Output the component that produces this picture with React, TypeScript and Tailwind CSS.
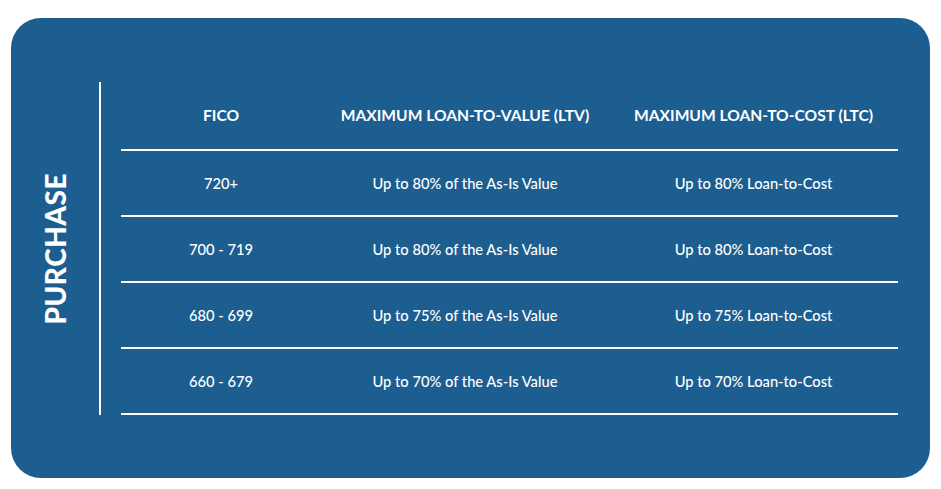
const rows = [
  { fico: "720+", ltv: "Up to 80% of the As-Is Value", ltc: "Up to 80% Loan-to-Cost" },
  { fico: "700 - 719", ltv: "Up to 80% of the As-Is Value", ltc: "Up to 80% Loan-to-Cost" },
  { fico: "680 - 699", ltv: "Up to 75% of the As-Is Value", ltc: "Up to 75% Loan-to-Cost" },
  { fico: "660 - 679", ltv: "Up to 70% of the As-Is Value", ltc: "Up to 70% Loan-to-Cost" },
];

export default function App() {
  return (
    <div className="min-h-[489px] w-[941px] bg-white pt-[18px] pl-[11px] font-['Lato','Liberation_Sans',sans-serif] text-white">
      <div className="flex w-[919px] h-[460px] rounded-[30px] bg-[#1d5e91] pt-[64px] pr-[32px]">
        {/* side label */}
        <div className="flex w-[88px] h-[333px] items-center justify-center">
          <span className="rotate-180 [writing-mode:vertical-rl] text-[28px] font-black leading-none tracking-[0.5px]">
            PURCHASE
          </span>
        </div>

        <div className="border-l-2 border-white pl-[20px] h-[333px]">
          <div className="w-[777px]">
            <div className="grid grid-cols-[200px_288px_1fr] h-[69px] items-center border-b-2 border-white text-[15.6px] font-bold">
              <div className="text-center">FICO</div>
              <div className="text-center">MAXIMUM LOAN-TO-VALUE (LTV)</div>
              <div className="text-center">MAXIMUM LOAN-TO-COST (LTC)</div>
            </div>
            {rows.map((r) => (
              <div
                key={r.fico}
                className="grid grid-cols-[200px_288px_1fr] h-[66px] items-center border-b-2 border-white text-[14.7px] font-medium"
              >
                <div className="text-center">{r.fico}</div>
                <div className="text-center">{r.ltv}</div>
                <div className="text-center">{r.ltc}</div>
              </div>
            ))}
          </div>
        </div>
      </div>
    </div>
  );
}
